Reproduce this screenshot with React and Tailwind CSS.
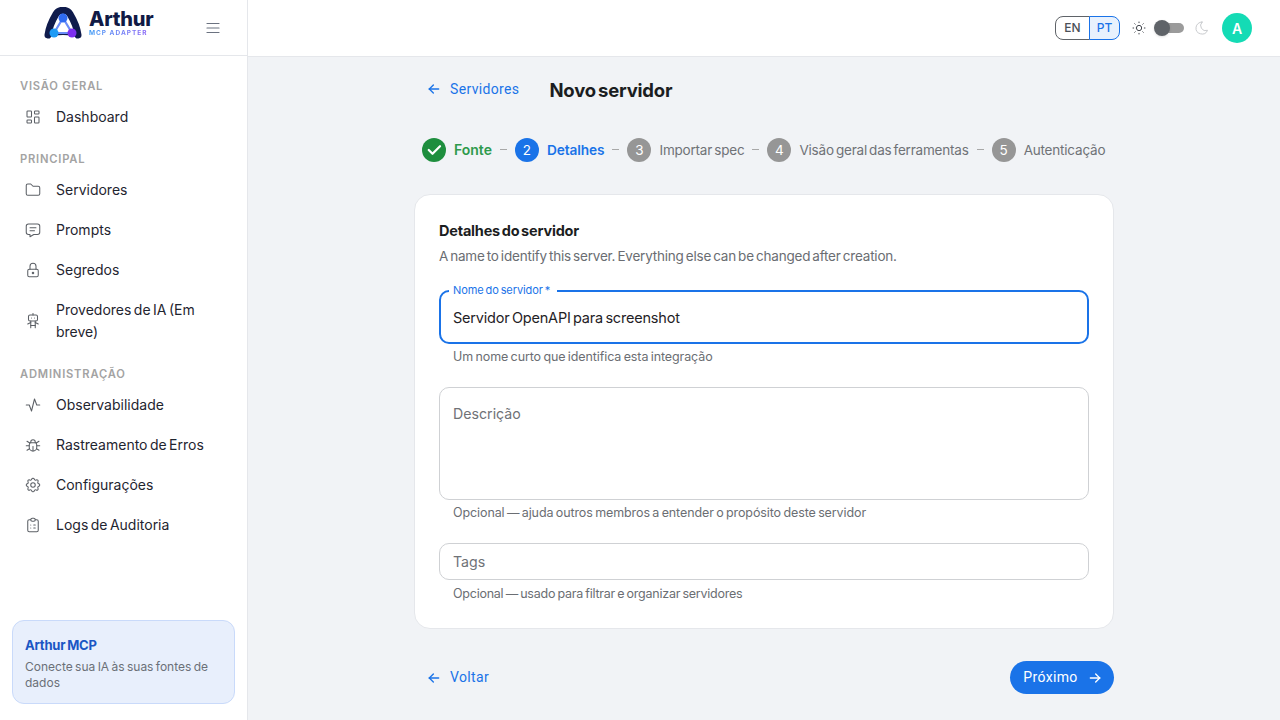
import {
  TbLayoutDashboard,
  TbFolder,
  TbMessage,
  TbLock,
  TbRobot,
  TbActivity,
  TbBug,
  TbSettings,
  TbClipboardList,
  TbMenu2,
  TbSun,
  TbMoon,
  TbArrowLeft,
  TbArrowRight,
  TbCheck,
} from 'react-icons/tb';

const sections = [
  { title: 'VISÃO GERAL', items: [{ icon: TbLayoutDashboard, label: 'Dashboard' }] },
  {
    title: 'PRINCIPAL',
    items: [
      { icon: TbFolder, label: 'Servidores' },
      { icon: TbMessage, label: 'Prompts' },
      { icon: TbLock, label: 'Segredos' },
      { icon: TbRobot, label: 'Provedores de IA (Em breve)' },
    ],
  },
  {
    title: 'ADMINISTRAÇÃO',
    items: [
      { icon: TbActivity, label: 'Observabilidade' },
      { icon: TbBug, label: 'Rastreamento de Erros' },
      { icon: TbSettings, label: 'Configurações' },
      { icon: TbClipboardList, label: 'Logs de Auditoria' },
    ],
  },
];

const steps = [
  { n: 1, label: 'Fonte', state: 'done' },
  { n: 2, label: 'Detalhes', state: 'active' },
  { n: 3, label: 'Importar spec' },
  { n: 4, label: 'Visão geral das ferramentas' },
  { n: 5, label: 'Autenticação' },
];

const Logo = () => (
  <svg width="38" height="33" viewBox="0 0 38 33" fill="none">
    <path d="M4 28C5 20 9 12 12 7C15 2 23 2 26 7C29 12 33 20 34 28" stroke="#0f1b4c" strokeWidth="7" strokeLinecap="round" />
    <path d="M4.500 29.500C8 27 13 27 19 27C25 27 30 27 33.500 29.500" stroke="#0f1b4c" strokeWidth="2" strokeLinecap="round" />
    <path d="M19 11L10 26H28Z" fill="#fff" stroke="#6a8cf8" strokeWidth="2.200" strokeLinejoin="round" />
    <circle cx="19" cy="11" r="4.500" fill="#2f6bf2" />
    <circle cx="10" cy="26" r="4.500" fill="#1e9bf5" />
    <circle cx="28" cy="26" r="4.500" fill="#7c2ff0" />
  </svg>
);

const Sidebar = () => (
  <aside className="w-[248px] h-screen shrink-0 bg-white border-r border-[#e5e7eb] flex flex-col">
    <div className="h-[56px] shrink-0 border-b border-[#e5e7eb] flex items-center">
      <div className="ml-[44px] mb-[8px] flex items-center gap-[7px]">
        <Logo />
        <div className="flex flex-col -mt-[2px]">
          <span className="text-[#111a45] text-[20px] leading-[21px] font-extrabold tracking-[-0.2px]">Arthur</span>
          <span className="text-[6.500px] leading-[7px] font-bold tracking-[1px] bg-gradient-to-r from-[#3b9cf5] to-[#8b5cf6] bg-clip-text text-transparent">MCP ADAPTER</span>
        </div>
      </div>
      <TbMenu2 size={18} strokeWidth={1.6} className="ml-auto mr-[25px] text-[#6b7280]" />
    </div>
    <nav className="flex-1 pt-[19px]">
      {sections.map((s) => (
        <div key={s.title} className="mb-[11px]">
          <div className="px-[20px] h-[22px] flex items-center text-[11.200px] font-semibold tracking-[0.8px] text-[#a3a3a3]">{s.title}</div>
          {s.items.map((it) => (
            <div key={it.label} className="flex items-center pl-[24px] pr-[25px] py-[9px] min-h-[40px] text-[14px] leading-[22px] text-[#1f2530] [word-spacing:-1.500px]">
              <it.icon size={18} strokeWidth={1.4} className="shrink-0 text-[#5c6066]" />
              <span className="ml-[14px]">{it.label}</span>
            </div>
          ))}
        </div>
      ))}
    </nav>
    <div className="mx-[12px] mb-[16px] h-[84px] rounded-[12px] border border-[#c9dafa] bg-[#e8effc] px-[12px] pt-[14px]">
      <div className="text-[13px] leading-[20px] font-bold text-[#1a56c4] [word-spacing:-1px] tracking-[-0.2px]">Arthur MCP</div>
      <div className="mt-[4px] text-[12px] leading-[16px] text-[#6b7078] [word-spacing:-1px]">Conecte sua IA às suas fontes de dados</div>
    </div>
  </aside>
);

const Topbar = () => (
  <header className="h-[57px] shrink-0 bg-white border-b border-[#e5e7eb] flex items-center justify-end pr-[28px]">
    <div className="flex items-center h-[24px] text-[12px] font-medium">
      <span className="h-full w-[35px] flex items-center justify-center border border-[#5f6368] rounded-l-[8px] text-[#4b5058]">EN</span>
      <span className="h-full w-[31px] -ml-px flex items-center justify-center border border-[#1a73e8] rounded-r-[8px] bg-[#e8f1fd] text-[#1a73e8]">PT</span>
    </div>
    <TbSun size={16} strokeWidth={1.5} className="ml-[11px] text-[#44484f]" />
    <div className="relative ml-[8px] w-[29px] h-[10px] rounded-full bg-[#9b9b9b]">
      <div className="absolute -left-px -top-[3px] w-[16px] h-[16px] rounded-full bg-[#5f6368] shadow" />
    </div>
    <TbMoon size={16} strokeWidth={1.5} className="ml-[10px] text-[#c9cbce]" />
    <div className="ml-[12px] w-[30px] h-[30px] rounded-full bg-[#14dbb5] text-white flex items-center justify-center text-[14px] font-semibold">A</div>
  </header>
);

const Stepper = () => (
  <div className="flex items-center pl-[8px] mt-[33px] h-[24px]">
    {steps.map((s, i) => (
      <div key={s.n} className="flex items-center">
        {i > 0 && <span className="mx-[8px] w-[7px] h-px bg-[#a8a8a8] -mt-[2px]" />}
        {s.state === 'done' ? (
          <span className="w-[24px] h-[24px] rounded-full bg-[#1e8e3e] text-white flex items-center justify-center">
            <TbCheck size={18} strokeWidth={3} />
          </span>
        ) : (
          <span className={`w-[24px] h-[24px] rounded-full text-white text-[13.500px] flex items-center justify-center ${s.state === 'active' ? 'bg-[#1a73e8]' : 'bg-[#969696]'}`}>{s.n}</span>
        )}
        <span className={`ml-[8px] leading-[24px] [word-spacing:-1.500px] whitespace-nowrap ${s.state === 'done' ? 'text-[14px] text-[#2e9a4c] font-semibold' : s.state === 'active' ? 'text-[13.700px] tracking-[-0.1px] text-[#1a73e8] font-semibold' : 'text-[13.500px] tracking-[-0.2px] text-[#6f7277]'}`}>{s.label}</span>
      </div>
    ))}
  </div>
);

const Helper = ({ children, className = 'mt-[3px] tracking-[-0.1px]' }) => (
  <p className={`px-[14px] text-[12.500px] leading-[20px] text-[#6b6e73] [word-spacing:-1px] ${className}`}>{children}</p>
);

const Form = () => (
  <section className="mt-[32px] h-[435px] bg-white border border-[#e5e7eb] rounded-[16px] px-[24px] pt-[24px]">
    <h2 className="text-[14.500px] leading-[24px] font-bold text-[#1b1d21] [word-spacing:-1.500px] tracking-[-0.2px]">Detalhes do servidor</h2>
    <p className="mt-[1px] text-[13.500px] leading-[24px] tracking-[-0.2px] text-[#6a6d72] [word-spacing:-1.500px]">A name to identify this server. Everything else can be changed after creation.</p>

    <div className="relative mt-[22px] h-[54px] rounded-[10px] border-2 border-[#1a73e8] px-[12px] pt-[2px] flex items-center text-[14.500px] tracking-[-0.2px] text-[#1f2226] [word-spacing:-1.500px]">
      <span className="absolute left-[8px] -top-[9px] pl-[4px] pr-[7px] bg-white text-[11px] leading-[15px] tracking-[-0.1px] text-[#1a73e8] [word-spacing:-1px]">Nome do servidor *</span>
      Servidor OpenAPI para screenshot
    </div>
    <Helper>Um nome curto que identifica esta integração</Helper>

    <div className="mt-[20px] h-[113px] rounded-[10px] border border-[#cfd1d4] px-[13px] pt-[15px] text-[14.200px] leading-[22px] text-[#6f7277]">Descrição</div>
    <Helper>Opcional — ajuda outros membros a entender o propósito deste servidor</Helper>

    <div className="mt-[20px] h-[37px] rounded-[10px] border border-[#cfd1d4] px-[13px] flex items-center text-[14.200px] text-[#6f7277]">Tags</div>
    <Helper className="mt-[4px] tracking-[-0.24px]">Opcional — usado para filtrar e organizar servidores</Helper>
  </section>
);

export default function App() {
  return (
    <div className="flex h-screen overflow-hidden bg-[#f1f3f6] font-['Inter',sans-serif]">
      <Sidebar />
      <div className="flex-1 flex flex-col min-w-0">
        <Topbar />
        <main className="w-[700px] mx-auto pt-[16px]">
          <div className="flex items-center h-[32px]">
            <button className="flex items-center pl-[12px] text-[14px] text-[#1a73e8]">
              <TbArrowLeft size={16} strokeWidth={2} />
              <span className="ml-[8px] font-['Roboto',sans-serif] tracking-[0.35px]">Servidores</span>
            </button>
            <h1 className="ml-[30px] mt-[3px] text-[18.500px] font-bold text-[#1b1d21] [word-spacing:-2px] tracking-[-0.2px]">Novo servidor</h1>
          </div>
          <Stepper />
          <Form />
          <div className="mt-[32px] flex items-center justify-between">
            <button className="flex items-center pl-[12px] text-[14px] text-[#1a73e8]">
              <TbArrowLeft size={16} strokeWidth={2} />
              <span className="ml-[8px] font-['Roboto',sans-serif] tracking-[0.35px]">Voltar</span>
            </button>
            <button className="h-[33px] w-[104px] pl-[2px] rounded-full bg-[#1a73e8] text-white text-[14px] flex items-center justify-center gap-[9px] font-['Roboto',sans-serif] tracking-[0.35px]">
              Próximo
              <TbArrowRight size={16} strokeWidth={2} />
            </button>
          </div>
        </main>
      </div>
    </div>
  );
}
